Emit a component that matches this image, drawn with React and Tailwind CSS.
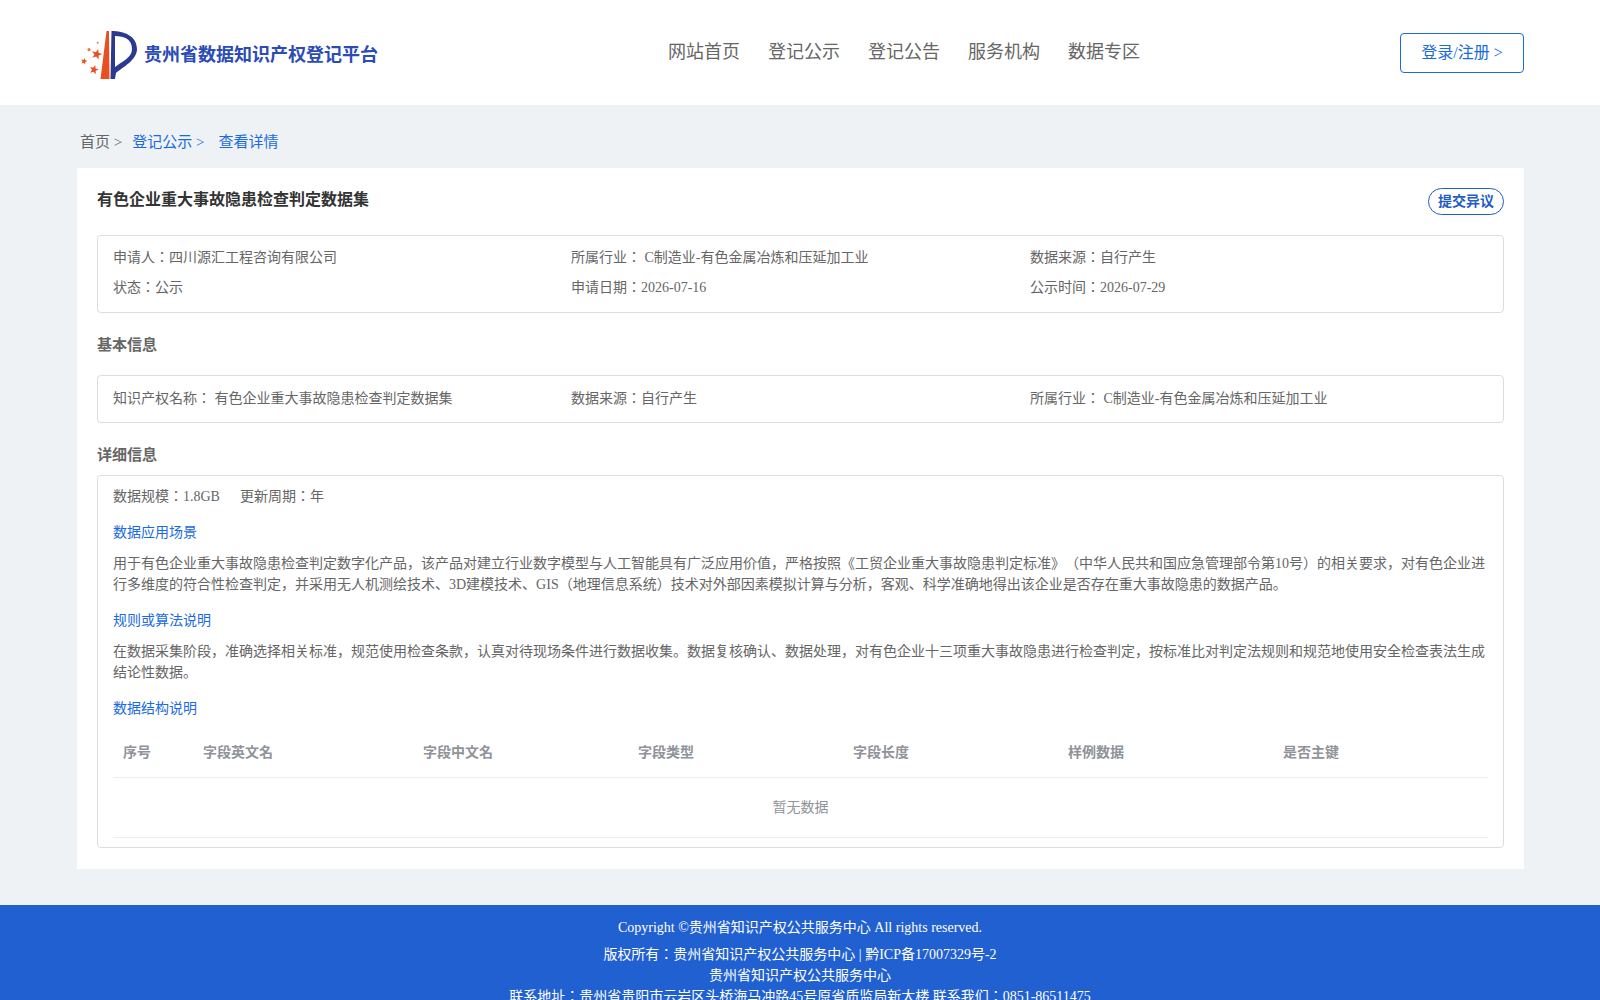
const blue = "text-[#1a6be0]";

const Row = ({ items }) => (
  <div className="grid grid-cols-[458px_459px_1fr]">
    {items.map((item, index) => (
      <div key={index}>{item}</div>
    ))}
  </div>
);

const star = (cx, cy, r, rot = -90) => {
  const points = [];
  for (let i = 0; i < 10; i++) {
    const radius = i % 2 === 0 ? r : r * 0.42;
    const angle = ((rot + i * 36) * Math.PI) / 180;
    points.push(`${cx + radius * Math.cos(angle)},${cy + radius * Math.sin(angle)}`);
  }
  return points.join(" ");
};

const Logo = () => (
  <svg width="60" height="52" viewBox="0 0 60 52" className="shrink-0">
    <polygon points="26.500,2 29,2 29.500,50 20.500,50" fill="#e8501f" />
    <path d="M31.500 2 C44 2 57 7 57 20 C57 31 43 38 36 44 L35 50 L30.500 50 Z" fill="#2b3a8f" />
    <path d="M35 7 C44 7 52 10 52 20 C52 29 41 33 35 38 Z" fill="#ffffff" />
    <polygon points={star(16.700, 25.300, 5.500, -75)} fill="#e8501f" />
    <polygon points={star(4, 32.300, 3.500, -75)} fill="#e8501f" />
    <polygon points={star(14, 40.700, 4.800, -75)} fill="#e8501f" />
    <circle cx="9" cy="20.700" r="1.600" fill="#ee7a50" />
    <circle cx="17.700" cy="13.700" r="1" fill="#ee7a50" />
  </svg>
);

const Header = () => (
  <header className="h-[105px] bg-white">
    <div className="ml-[80px] mr-[76px] flex h-full items-center">
      <div className="flex w-[497px] items-center gap-[4px] pt-1">
        <Logo />
        <span className="mt-0.5 text-[18px] font-bold text-[#2b4bb5]">贵州省数据知识产权登记平台</span>
      </div>
      <nav className="ml-[91px] flex gap-[28px] text-[18px] text-[#666666]">
        <a>网站首页</a>
        <a>登记公示</a>
        <a>登记公告</a>
        <a>服务机构</a>
        <a>数据专区</a>
      </nav>
      <button className={`ml-auto h-10 w-[124px] rounded border border-[#1a6be0] text-[16px] ${blue}`}>
        登录/注册 &gt;
      </button>
    </div>
  </header>
);

const Field = ({ children, className = "" }) => (
  <div className={`rounded border border-[#dddddd] px-[15px] ${className}`}>{children}</div>
);

const columns = ["序号", "字段英文名", "字段中文名", "字段类型", "字段长度", "样例数据", "是否主键"];

const Footer = () => (
  <footer className="h-[95px] overflow-hidden bg-[#2160d0] pt-3 text-center text-[14px] leading-[21px] text-white">
    <p className="mb-1.5">Copyright ©贵州省知识产权公共服务中心 All rights reserved.</p>
    <p>版权所有：贵州省知识产权公共服务中心 | 黔ICP备17007329号-2</p>
    <p>贵州省知识产权公共服务中心</p>
    <p>联系地址：贵州省贵阳市云岩区头桥海马冲路45号原省质监局新大楼 联系我们：0851-86511475</p>
  </footer>
);

export default function App() {
  return (
    <div className="h-[1000px] overflow-hidden bg-[#eff2f5] font-['Liberation_Serif','Noto_Sans_CJK_JP',serif] text-[14px] text-[#666666] [text-spacing-trim:space-all]">
      <Header />

      {/* Breadcrumb */}
      <div className="mx-20 flex h-[63px] items-center pt-3 text-[15px]">
        <span>首页 &gt;</span>
        <span className={`ml-[10px] ${blue}`}>登记公示 &gt;</span>
        <span className={`ml-[14px] ${blue}`}>查看详情</span>
      </div>

      {/* Card */}
      <main className="ml-[77px] mr-[76px] h-[701px] bg-white px-5 pt-5">
        <div className="flex items-start justify-between">
          <h1 className="text-[16px] font-bold leading-6 text-[#333333]">有色企业重大事故隐患检查判定数据集</h1>
          <button className="h-[27px] w-[76px] rounded-[14px] border border-[#1f5cc4] text-[14px] font-bold text-[#1f5cc4]">
            提交异议
          </button>
        </div>

        <Field className="mt-5 h-[78px] pt-[7px] leading-[30px]">
          <Row items={["申请人：四川源汇工程咨询有限公司", "所属行业： C制造业-有色金属冶炼和压延加工业", "数据来源：自行产生"]} />
          <Row items={["状态：公示", "申请日期：2026-07-16", "公示时间：2026-07-29"]} />
        </Field>

        <h2 className="mt-5 text-[15px] font-bold leading-6">基本信息</h2>
        <Field className="mt-[18px] h-12 leading-[46px]">
          <Row items={["知识产权名称： 有色企业重大事故隐患检查判定数据集", "数据来源：自行产生", "所属行业： C制造业-有色金属冶炼和压延加工业"]} />
        </Field>

        <h2 className="mt-5 text-[15px] font-bold leading-6">详细信息</h2>
        <Field className="mt-2 h-[373px] pt-[10px]">
          <div className="flex h-[21px] gap-[20px] leading-[21px]">
            <span>数据规模：1.8GB</span>
            <span>更新周期：年</span>
          </div>
          <h3 className={`mt-[15px] leading-[21px] ${blue}`}>数据应用场景</h3>
          <p className="mt-[10px] leading-[21px]">
            用于有色企业重大事故隐患检查判定数字化产品，该产品对建立行业数字模型与人工智能具有广泛应用价值，严格按照《工贸企业重大事故隐患判定标准》（中华人民共和国应急管理部令第10号）的相关要求，对有色企业进行多维度的符合性检查判定，并采用无人机测绘技术、3D建模技术、GIS（地理信息系统）技术对外部因素模拟计算与分析，客观、科学准确地得出该企业是否存在重大事故隐患的数据产品。
          </p>
          <h3 className={`mt-[15px] leading-[21px] ${blue}`}>规则或算法说明</h3>
          <p className="mt-[10px] leading-[21px]">
            在数据采集阶段，准确选择相关标准，规范使用检查条款，认真对待现场条件进行数据收集。数据复核确认、数据处理，对有色企业十三项重大事故隐患进行检查判定，按标准比对判定法规则和规范地使用安全检查表法生成结论性数据。
          </p>
          <h3 className={`mt-[15px] leading-[21px] ${blue}`}>数据结构说明</h3>

          {/* Table */}
          <div className="mt-[9px] grid h-[50px] grid-cols-[80px_220px_215px_215px_215px_215px_1fr] items-center border-b border-[#ebeef5] pl-[10px] font-bold text-[#909399]">
            {columns.map((column) => (
              <div key={column}>{column}</div>
            ))}
          </div>
          <div className="h-[60px] border-b border-[#ebeef5] text-center leading-[60px] text-[#909399]">暂无数据</div>
        </Field>
      </main>

      <div className="h-9" />
      <Footer />
    </div>
  );
}
